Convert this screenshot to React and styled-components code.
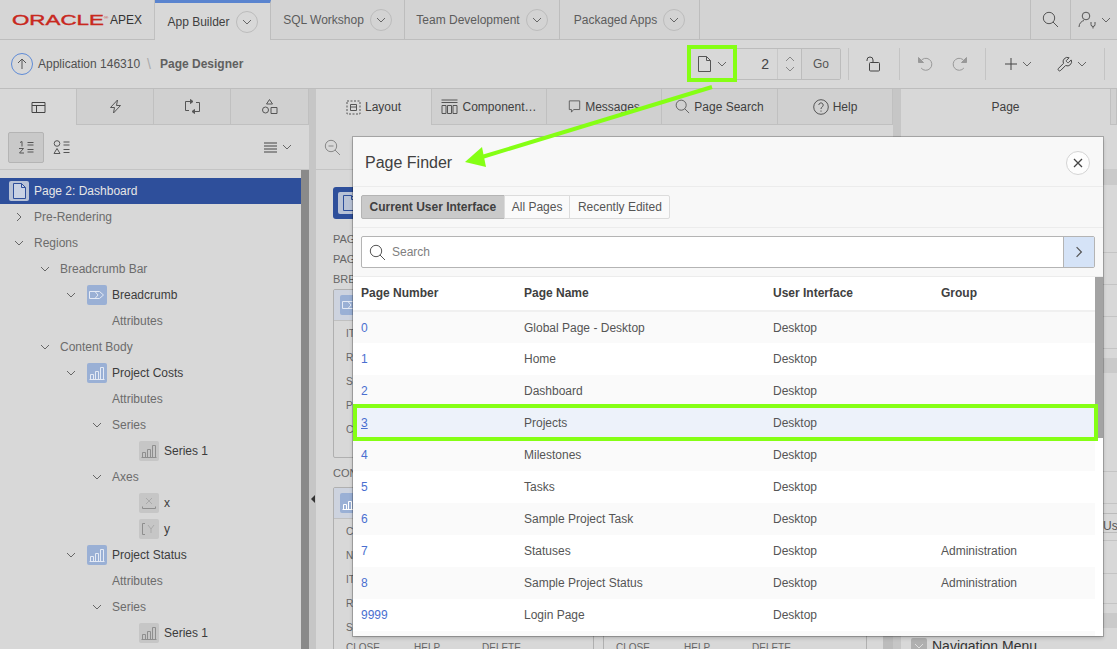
import React from 'react';
import styled, { createGlobalStyle } from 'styled-components';

const GlobalStyle = createGlobalStyle`
  html, body { margin: 0; height: 100%; overflow: hidden; background: #d8d8d8; }
  body { font-family: "Liberation Sans", Arial, sans-serif; font-size: 12px; color: #404040; }
  * { box-sizing: border-box; }
`;

const Page = styled.div`
  position: relative;
  width: 1117px;
  height: 649px;
  display: flex;
  flex-direction: column;
  overflow: hidden;
`;

// icons
const Svg = styled.svg`
  display: block;
  flex: none;
  fill: none;
  stroke: ${({ $color }) => $color || '#555'};
  stroke-width: ${({ $sw }) => $sw || 1};
`;

const Icon = ({ size = 16, w, h, color, sw, box, children }) => (
  <Svg width={w || size} height={h || size} viewBox={box || '0 0 16 16'} $color={color} $sw={sw}>
    {children}
  </Svg>
);

const ChevronDown = ({ size = 10, color = '#666' }) => (
  <Icon size={size} box="0 0 10 10" color={color}><path d="M1 3l4 4 4-4" /></Icon>
);
const ChevronRight = ({ size = 10, color = '#666' }) => (
  <Icon size={size} box="0 0 10 10" color={color}><path d="M3 1l4 4-4 4" /></Icon>
);
const Magnifier = ({ size = 17, color = '#555' }) => (
  <Icon size={size} box="0 0 17 17" color={color}><circle cx="7" cy="7" r="5.7" /><path d="M11 11l5 5" /></Icon>
);
const DocIcon = ({ w = 13, h = 16, color = '#555', fill = 'none' }) => (
  <Icon w={w} h={h} box="0 0 13 16" color={color}><path d="M.5.5h8l4 4v11H.5z" fill={fill} /><path d="M8.5.5v4h4" /></Icon>
);
const BarsIcon = ({ color = '#fff' }) => (
  <Icon w={16} h={14} box="0 0 16 14" color={color}>
    <path d="M.5 13.5h15M1.5 13.5v-5h3v5M6.5 13.5v-8h3v8M11.5 13.5V1.5h3v12" />
  </Icon>
);
const CrumbIcon = () => (
  <Icon w={16} h={10} box="0 0 16 10" color="#e4eaf5">
    <path d="M.5 1.5h10l4 3.5-4 3.5H.5zM6 1.5l3 3.5-3 3.5" />
  </Icon>
);

// top bar
const TopNav = styled.header`
  height: 40px;
  flex: none;
  display: flex;
  background: #d3d3d3;
  border-bottom: 1px solid #bdbdbd;
`;
const LogoCell = styled.div`
  width: 155px;
  display: flex;
  align-items: center;
  padding-left: 12px;
  background: #d6d6d6;
  border-right: 1px solid #c0c0c0;
`;
const OracleWord = styled.span`
  width: 98px;
  font-size: 14.5px;
  color: #c8281e;
  transform: scaleX(1.54);
  transform-origin: left center;
  -webkit-text-stroke: 0.4px #c8281e;
  white-space: nowrap;
`;
const OracleMark = styled.sup`
  font-size: 4px;
  -webkit-text-stroke: 0;
`;
const ApexWord = styled.span`
  font-size: 12px;
  color: #333;
`;
const NavTab = styled.div`
  width: ${({ $w }) => $w}px;
  display: flex;
  align-items: center;
  justify-content: center;
  gap: 6px;
  color: ${({ $active }) => ($active ? '#404040' : '#5c5c5c')};
  background: ${({ $active }) => ($active ? '#d8d8d8' : 'transparent')};
  border-right: 1px solid #bdbdbd;
  border-top: ${({ $active }) => ($active ? '3px solid #5a84cf' : '0')};
  margin-bottom: ${({ $active }) => ($active ? '-1px' : '0')};
  white-space: nowrap;
`;
const RoundToggle = styled.span`
  width: 22px;
  height: 22px;
  border: 1px solid #bcbcbc;
  border-radius: 50%;
  display: flex;
  align-items: center;
  justify-content: center;
`;
const NavSpacer = styled.div`
  flex: 1;
`;
const NavAction = styled.div`
  width: ${({ $w }) => $w}px;
  display: flex;
  align-items: center;
  justify-content: center;
  gap: 3px;
  border-left: 1px solid #bdbdbd;
`;

// second bar
const ToolBar = styled.div`
  height: 49px;
  flex: none;
  display: flex;
  align-items: center;
  padding-left: 11px;
  background: #d8d8d8;
  border-bottom: 1px solid #bdbdbd;
`;
const UpButton = styled.span`
  width: 22px;
  height: 22px;
  border: 1px solid #5f8bd6;
  border-radius: 50%;
  display: flex;
  align-items: center;
  justify-content: center;
`;
const Crumb = styled.span`
  margin-left: 5px;
  color: #505050;
`;
const CrumbSep = styled.span`
  margin: 0 9px 0 7px;
  color: #aaa;
  font-size: 14px;
`;
const CrumbCurrent = styled.span`
  font-weight: bold;
  color: #606060;
`;
const ToolSpacer = styled.div`
  flex: 1;
`;
const PageBox = styled.div`
  width: 154px;
  height: 32px;
  margin-right: 7px;
  display: flex;
  border: 1px solid #bcbcbc;
  border-radius: 2px;
`;
const PagePick = styled.div`
  width: 49px;
  display: flex;
  align-items: center;
  justify-content: center;
  gap: 6px;
`;
const PageNumber = styled.div`
  width: 40px;
  display: flex;
  align-items: center;
  justify-content: flex-end;
  padding-right: 8px;
  font-size: 14px;
  color: #444;
`;
const Spinner = styled.div`
  width: 24px;
  display: flex;
  flex-direction: column;
  align-items: center;
  justify-content: center;
  gap: 4px;
  border-left: 1px solid #c8c8c8;
`;
const GoButton = styled.div`
  flex: 1;
  display: flex;
  align-items: center;
  justify-content: center;
  color: #555;
  background: #d4d4d4;
  border-left: 1px solid #bcbcbc;
`;
const ToolSep = styled.span`
  width: 1px;
  height: 32px;
  background: #c4c4c4;
`;
const ToolCell = styled.div`
  width: ${({ $w }) => $w}px;
  padding-right: ${({ $pr }) => $pr || 0}px;
  display: flex;
  align-items: center;
  justify-content: center;
  gap: ${({ $gap }) => $gap || 4}px;
`;

// workspace
const Workspace = styled.main`
  flex: 1;
  min-height: 0;
  display: flex;
`;
const Panel = styled.section`
  width: ${({ $w }) => $w}px;
  flex: none;
  display: flex;
  flex-direction: column;
  overflow: hidden;
  background: #d8d8d8;
`;
const Splitter = styled.div`
  width: ${({ $w }) => $w}px;
  flex: none;
  background: #c6c6c6;
  display: flex;
  align-items: center;
  justify-content: center;
  padding-top: 260px;
`;
const SplitArrow = styled.span`
  width: 0;
  height: 0;
  border: 4px solid transparent;
  border-left: 0;
  border-right: 4px solid #333;
`;
const TabStrip = styled.div`
  height: 36px;
  flex: none;
  display: flex;
  background: #d0d0d0;
`;
const PanelTab = styled.div`
  width: ${({ $w }) => $w}px;
  flex: ${({ $grow }) => ($grow ? 1 : 'none')};
  display: flex;
  align-items: center;
  justify-content: center;
  gap: 4px;
  color: #404040;
  white-space: nowrap;
  background: ${({ $active }) => ($active ? '#d8d8d8' : 'transparent')};
  border-right: 1px solid #c0c0c0;
  border-bottom: ${({ $active }) => ($active ? '0' : '1px solid #c0c0c0')};
`;
const SubBar = styled.div`
  height: 45px;
  flex: none;
  display: flex;
  align-items: center;
  padding: 0 17px 0 8px;
  border-bottom: 1px solid #c4c4c4;
`;
const PressedButton = styled.div`
  width: 36px;
  height: 31px;
  display: flex;
  align-items: center;
  justify-content: center;
  background: #c9c9c9;
  border: 1px solid #b4b4b4;
  border-radius: 2px;
`;
const PlainButton = styled.div`
  margin-left: 9px;
  width: 18px;
  display: flex;
  justify-content: center;
`;
const MenuButton = styled.div`
  margin-left: auto;
  display: flex;
  align-items: center;
  gap: 5px;
`;

// tree
const TreeWrap = styled.div`
  flex: 1;
  min-height: 0;
  display: flex;
`;
const Tree = styled.div`
  flex: 1;
  padding-top: 8px;
  overflow: hidden;
`;
const Scroll = styled.div`
  width: 8px;
  flex: none;
  background: #8a8a8a;
`;
const TreeRow = styled.div`
  height: 26px;
  display: flex;
  align-items: center;
  padding-left: ${({ $d }) => ($d < 0 ? 9 : 14 + $d * 26)}px;
  color: ${({ $selected, $dark }) => ($selected ? '#e6e6e6' : $dark ? '#3c3c3c' : '#6c6c6c')};
  background: ${({ $selected }) => ($selected ? '#2e4f9b' : 'transparent')};
  white-space: nowrap;
`;
const ChevronSlot = styled.span`
  width: 20px;
  flex: none;
  display: flex;
`;
const NodeIcon = styled.span`
  width: 20px;
  height: 20px;
  margin: ${({ $root }) => ($root ? '0 5px 0 0' : '0 5px 0 1px')};
  flex: none;
  display: flex;
  align-items: center;
  justify-content: center;
  border-radius: 2px;
  background: ${({ $tone }) => ($tone === 'blue' ? '#9ab0d5' : $tone === 'root' ? '#b8c2d6' : '#c6c6c6')};
  color: #9a9a9a;
  font-size: 10px;
`;

const treeRows = [
  { d: -1, label: 'Page 2: Dashboard', icon: 'root', selected: true },
  { d: 0, label: 'Pre-Rendering', chevron: 'right' },
  { d: 0, label: 'Regions', chevron: 'down' },
  { d: 1, label: 'Breadcrumb Bar', chevron: 'down' },
  { d: 2, label: 'Breadcrumb', chevron: 'down', icon: 'crumb', dark: true },
  { d: 3, label: 'Attributes' },
  { d: 1, label: 'Content Body', chevron: 'down' },
  { d: 2, label: 'Project Costs', chevron: 'down', icon: 'chart', dark: true },
  { d: 3, label: 'Attributes' },
  { d: 3, label: 'Series', chevron: 'down' },
  { d: 4, label: 'Series 1', icon: 'series', dark: true },
  { d: 3, label: 'Axes', chevron: 'down' },
  { d: 4, label: 'x', icon: 'x', dark: true },
  { d: 4, label: 'y', icon: 'y', dark: true },
  { d: 2, label: 'Project Status', chevron: 'down', icon: 'chart', dark: true },
  { d: 3, label: 'Attributes' },
  { d: 3, label: 'Series', chevron: 'down' },
  { d: 4, label: 'Series 1', icon: 'series', dark: true },
];

const TreeIcon = ({ kind }) => {
  if (kind === 'root') {
    return <NodeIcon $tone="root" $root><DocIcon color="#2e4f9b" fill="#c9d2e4" /></NodeIcon>;
  }
  if (kind === 'crumb') return <NodeIcon $tone="blue"><CrumbIcon /></NodeIcon>;
  if (kind === 'chart') return <NodeIcon $tone="blue"><BarsIcon color="#e4eaf5" /></NodeIcon>;
  if (kind === 'series') return <NodeIcon><BarsIcon color="#8e8e8e" /></NodeIcon>;
  if (kind === 'x') {
    return (
      <NodeIcon>
        <Icon w={16} h={14} box="0 0 16 14" color="#8e8e8e">
          <path d="M5 2l6 6M11 2l-6 6" stroke="#aaa" /><path d="M1.5 10.5v2h13v-2" />
        </Icon>
      </NodeIcon>
    );
  }
  return (
    <NodeIcon>
      <Icon w={16} h={14} box="0 0 16 14" color="#8e8e8e">
        <path d="M4 1.5H1.5v11H4" /><path d="M7 3l3 4 3-4M10 7v4" stroke="#aaa" />
      </Icon>
    </NodeIcon>
  );
};

// center panel body
const CenterBody = styled.div`
  flex: 1;
  min-height: 0;
  display: flex;
  overflow: hidden;
`;
const Canvas = styled.div`
  width: 567px;
  flex: none;
  padding: 17px 0 0 17px;
`;
const CenterScroll = styled.div`
  width: 10px;
  flex: none;
  background: #bcbcbc;
`;
const PageBlock = styled.div`
  width: 40px;
  height: 32px;
  margin-bottom: 10px;
  display: flex;
  align-items: center;
  padding-left: 5px;
  background: #2e4f9b;
  border-radius: 3px;
`;
const PageBlockIcon = styled.span`
  width: 22px;
  height: 22px;
  display: flex;
  align-items: center;
  justify-content: center;
  background: #b8c2d6;
  border-radius: 2px;
`;
const GroupLabel = styled.div`
  height: ${({ $h }) => $h || 20}px;
  display: flex;
  align-items: center;
  font-size: 11px;
  color: #666;
  white-space: nowrap;
`;
const BoxGrid = styled.div`
  display: grid;
  grid-template-columns: 261px 264px;
  gap: 9px;
`;
const RegionBox = styled.div`
  height: ${({ $h }) => $h}px;
  border: 1px solid #b0b0b0;
  border-radius: 2px;
  overflow: hidden;
`;
const RegionHead = styled.div`
  height: 31px;
  display: flex;
  align-items: center;
  padding-left: 5px;
  background: #cdd3df;
  border-bottom: 1px solid #c0c0c0;
`;
const RegionRow = styled.div`
  height: 24px;
  display: flex;
  align-items: center;
  padding-left: 12px;
  font-size: 10px;
  color: #666;
`;
const RegionFoot = styled.div`
  display: flex;
  padding: 3px 0 0 12px;
  font-size: 10px;
  color: #666;
`;
const FootAction = styled.span`
  width: 68px;
`;

// right panel
const PropBody = styled.div`
  flex: 1;
  padding-top: 44px;
`;
const PropBand = styled.div`
  height: ${({ $h }) => $h || 15}px;
  background: #cacaca;
`;
const PropLine = styled.div`
  height: ${({ $h }) => $h}px;
  padding-left: 202px;
  display: flex;
  align-items: center;
  color: #555;
  border-bottom: ${({ $plain }) => ($plain ? '0' : '1px solid #c4c4c4')};
  white-space: nowrap;
  overflow: hidden;
`;
const ValueBox = styled.span`
  height: 20px;
  flex: 1;
  align-self: flex-end;
  margin-bottom: 7px;
  padding-top: 5px;
  border-top: 1px solid #bbb;
  border-bottom: 1px solid #bbb;
`;
const PropTitle = styled.div`
  margin-top: 8px;
  height: 20px;
  padding-left: 10px;
  display: flex;
  align-items: center;
  gap: 5px;
  font-size: 14px;
  color: #333;
`;
const CollapseBox = styled.span`
  width: 16px;
  height: 16px;
  display: flex;
  align-items: center;
  justify-content: center;
  background: #b0b0b0;
  border-radius: 2px;
`;

// modal
const Modal = styled.div`
  position: absolute;
  left: 353px;
  top: 137px;
  width: 750px;
  height: 499px;
  display: flex;
  flex-direction: column;
  background: #f8f8f8;
  box-shadow: 0 0 0 1px rgba(0, 0, 0, 0.22), 0 2px 4px rgba(0, 0, 0, 0.2);
`;
const ModalHead = styled.div`
  height: 50px;
  flex: none;
  display: flex;
  align-items: center;
  justify-content: space-between;
  padding: 2px 13px 0 12px;
  border-bottom: 1px solid #ececec;
`;
const ModalTitle = styled.h1`
  margin: 0;
  font-size: 16px;
  font-weight: normal;
  color: #404040;
`;
const CloseButton = styled.span`
  width: 24px;
  height: 24px;
  display: flex;
  align-items: center;
  justify-content: center;
  border: 1px solid #d4d4d4;
  border-radius: 50%;
  background: #fdfdfd;
`;
const FilterBar = styled.div`
  height: 41px;
  flex: none;
  display: flex;
  align-items: flex-start;
  padding: 8px 0 0 8px;
  border-bottom: 1px solid #ececec;
`;
const Segment = styled.div`
  height: 24px;
  padding: 0 ${({ $pad }) => $pad}px;
  display: flex;
  align-items: center;
  color: ${({ $on }) => ($on ? '#404040' : '#555')};
  font-weight: ${({ $on }) => ($on ? 'bold' : 'normal')};
  background: ${({ $on }) => ($on ? '#cacaca' : '#fafafa')};
  border: 1px solid ${({ $on }) => ($on ? '#b4b4b4' : '#dcdcdc')};
  margin-left: -1px;
  &:first-child { margin-left: 0; border-radius: 2px 0 0 2px; }
  &:last-child { border-radius: 0 2px 2px 0; }
`;
const SearchBar = styled.div`
  height: 49px;
  flex: none;
  padding: 8px 8px 0;
  background: #f8f8f8;
  border-bottom: 1px solid #ececec;
`;
const SearchField = styled.div`
  height: 32px;
  display: flex;
  align-items: center;
  background: #fff;
  border: 1px solid #b4b4b4;
  border-radius: 2px;
`;
const SearchText = styled.span`
  flex: 1;
  margin-left: 6px;
  color: #808080;
`;
const SearchGo = styled.span`
  width: 31px;
  height: 100%;
  display: flex;
  align-items: center;
  justify-content: center;
  background: #d5e3f7;
  border-left: 1px solid #b4b4b4;
`;
const SearchGlass = styled.span`
  margin-left: 7px;
`;
const TableWrap = styled.div`
  flex: 1;
  min-height: 0;
  display: flex;
  background: #fff;
`;
const TableArea = styled.div`
  width: 742px;
  flex: none;
  overflow: hidden;
  background: #fafafa;
`;
const TableScroll = styled.div`
  width: 8px;
  flex: none;
`;
const ScrollThumb = styled.div`
  height: 161px;
  background: #a3a3a3;
`;
const Table = styled.table`
  width: 100%;
  table-layout: fixed;
  border-collapse: collapse;
`;
const Th = styled.th`
  width: ${({ $w }) => ($w ? `${$w}px` : 'auto')};
  height: 34px;
  padding: 0 0 2px 8px;
  text-align: left;
  font-weight: bold;
  color: #404040;
  background: #fff;
  border-bottom: 2px solid #f0f0f0;
`;
const Tr = styled.tr`
  height: 32px;
  background: ${({ $hit, $odd }) => ($hit ? '#edf2fa' : $odd ? '#fafafa' : '#fff')};
`;
const Td = styled.td`
  padding: 0 0 0 8px;
  color: #555;
  white-space: nowrap;
`;
const NumberLink = styled.a`
  color: #4a6fd0;
  text-decoration: ${({ $hit }) => ($hit ? 'underline' : 'none')};
`;

// green call-outs over the screenshot
const Callouts = styled.svg`
  position: absolute;
  left: 0;
  top: 0;
  width: 1117px;
  height: 649px;
  pointer-events: none;
`;

const pages = [
  ['0', 'Global Page - Desktop', ''],
  ['1', 'Home', ''],
  ['2', 'Dashboard', ''],
  ['3', 'Projects', ''],
  ['4', 'Milestones', ''],
  ['5', 'Tasks', ''],
  ['6', 'Sample Project Task', ''],
  ['7', 'Statuses', 'Administration'],
  ['8', 'Sample Project Status', 'Administration'],
  ['9999', 'Login Page', ''],
];

const navTabs = [
  { label: 'App Builder', w: 116, active: true },
  { label: 'SQL Workshop', w: 134 },
  { label: 'Team Development', w: 155 },
  { label: 'Packaged Apps', w: 140 },
];

const RegionCard = () => (
  <RegionBox $h={180}>
    <RegionHead>
      <NodeIcon $tone="blue"><BarsIcon /></NodeIcon>
    </RegionHead>
    <RegionRow>CHART</RegionRow>
    <RegionRow>NAME</RegionRow>
    <RegionRow>ITEMS</RegionRow>
    <RegionRow>REGIONS</RegionRow>
    <RegionRow>SUB REGIONS</RegionRow>
    <RegionFoot>
      <FootAction>CLOSE</FootAction>
      <FootAction>HELP</FootAction>
      <FootAction>DELETE</FootAction>
    </RegionFoot>
  </RegionBox>
);

export default function App() {
  return (
    <>
      <GlobalStyle />
      <Page>
        <TopNav>
          <LogoCell>
            <OracleWord>ORACLE<OracleMark>®</OracleMark></OracleWord>
            <ApexWord>APEX</ApexWord>
          </LogoCell>
          {navTabs.map((tab) => (
            <NavTab key={tab.label} $w={tab.w} $active={tab.active}>
              {tab.label}
              <RoundToggle><ChevronDown /></RoundToggle>
            </NavTab>
          ))}
          <NavSpacer />
          <NavAction $w={40}><Magnifier /></NavAction>
          <NavAction $w={47}>
            <Icon w={20} h={18} box="0 0 20 18" color="#555">
              <circle cx="8" cy="5" r="3.8" /><path d="M1 16c0-4 3-6 5-6.5M13 11v2.5a2 2 0 0 0 4 0V11M15 15.500v2" />
            </Icon>
            <ChevronDown />
          </NavAction>
        </TopNav>

        <ToolBar>
          <UpButton>
            <Icon size={12} box="0 0 12 12" color="#555"><path d="M6 11V1M2 5l4-4 4 4" /></Icon>
          </UpButton>
          <Crumb>Application 146310</Crumb>
          <CrumbSep>\</CrumbSep>
          <CrumbCurrent>Page Designer</CrumbCurrent>
          <ToolSpacer />
          <PageBox>
            <PagePick><DocIcon /><ChevronDown /></PagePick>
            <PageNumber>2</PageNumber>
            <Spinner>
              <Icon w={10} h={6} box="0 0 10 6" color="#888"><path d="M1 5l4-4 4 4" /></Icon>
              <Icon w={10} h={6} box="0 0 10 6" color="#888"><path d="M1 1l4 4 4-4" /></Icon>
            </Spinner>
            <GoButton>Go</GoButton>
          </PageBox>
          <ToolSep />
          <ToolCell $w={50} $pr={3}>
            <Icon size={16} color="#444"><rect x="4.500" y="6.500" width="10" height="8.500" rx="1" /><path d="M8 6.500V4a3 3 0 0 0-6 0v1" /></Icon>
          </ToolCell>
          <ToolSep />
          <ToolCell $w={85} $gap={19}>
            <Icon size={16} color="#999"><path d="M3.500 5.500a6 6 0 1 1 .6 6.500" /><path d="M1.500 1.500v5h5z" fill="#999" /></Icon>
            <Icon size={16} color="#999"><path d="M12.500 5.500a6 6 0 1 0-.6 6.500" /><path d="M14.500 1.500v5h-5z" fill="#999" /></Icon>
          </ToolCell>
          <ToolSep />
          <ToolCell $w={64}>
            <Icon size={14} box="0 0 14 14" color="#444"><path d="M7 1v12M1 7h12" /></Icon>
            <ChevronDown />
          </ToolCell>
          <ToolCell $w={54} $pr={12}>
            <Icon size={17} box="0 0 24 24" color="#444" sw={1.4}>
              <path d="M14.700 6.300a1 1 0 0 0 0 1.400l1.600 1.600a1 1 0 0 0 1.400 0l3.770-3.770a6 6 0 0 1-7.940 7.940l-6.910 6.910a2.120 2.120 0 0 1-3-3l6.910-6.910a6 6 0 0 1 7.940-7.940z" />
            </Icon>
            <ChevronDown />
          </ToolCell>
          <ToolSep />
          <ToolCell $w={12} />
        </ToolBar>

        <Workspace>
          <Panel $w={309}>
            <TabStrip>
              <PanelTab $w={77} $active>
                <Icon size={15} box="0 0 15 15" color="#444"><path d="M1 2.500h13v10H1zM1 5.500h13M5.500 5.500v7" /></Icon>
              </PanelTab>
              <PanelTab $w={77}>
                <Icon size={15} box="0 0 15 15" color="#555"><path d="M9.500 1L2.500 8.500h4L5.500 14l7-7.500h-4z" /></Icon>
              </PanelTab>
              <PanelTab $w={77}>
                <Icon size={17} box="0 0 17 17" color="#555">
                  <path d="M6 3.500H1.500v9H5M11 13.500h4.500v-9H12" /><path d="M6.500 1.500v4l2.500-2zM10.500 11.500v4l-2.500-2z" fill="#555" />
                </Icon>
              </PanelTab>
              <PanelTab $grow>
                <Icon size={17} box="0 0 17 17" color="#555">
                  <path d="M8.500 1.500l3 4.500h-6z" /><circle cx="4.500" cy="12" r="3" /><path d="M10 9.500h6v6h-6z" />
                </Icon>
              </PanelTab>
            </TabStrip>
            <SubBar>
              <PressedButton>
                <Icon w={18} h={14} box="0 0 18 14" color="#555">
                  <path d="M3 2.500l2-1v5M10.500 2.500h6M10.500 5h6M2 8.500h4.500L2.500 13h4.500M10.500 9.500h6M10.500 12h6" />
                </Icon>
              </PressedButton>
              <PlainButton>
                <Icon w={18} h={15} box="0 0 18 15" color="#555">
                  <circle cx="4" cy="3.500" r="2.800" /><path d="M4 8.500l3 5H1zM10.500 2h6M10.500 5h6M10.500 9.500h6M10.500 12.500h6" />
                </Icon>
              </PlainButton>
              <MenuButton>
                <Icon w={13} h={11} box="0 0 13 11" color="#444"><path d="M0 1h13M0 4h13M0 7h13M0 10h13" /></Icon>
                <ChevronDown />
              </MenuButton>
            </SubBar>
            <TreeWrap>
              <Tree>
                {treeRows.map((row, i) => (
                  <TreeRow key={i} $d={row.d} $selected={row.selected} $dark={row.dark}>
                    {row.d >= 0 && (
                      <ChevronSlot>
                        {row.chevron === 'down' && <ChevronDown />}
                        {row.chevron === 'right' && <ChevronRight />}
                      </ChevronSlot>
                    )}
                    {row.icon && <TreeIcon kind={row.icon} />}
                    {row.label}
                  </TreeRow>
                ))}
              </Tree>
              <Scroll />
            </TreeWrap>
          </Panel>

          <Splitter $w={7}><SplitArrow /></Splitter>

          <Panel $w={577}>
            <TabStrip>
              <PanelTab $w={116} $active>
                <Icon size={15} box="0 0 15 15" color="#555">
                  <path d="M1 1h13v13H1z" strokeDasharray="2 1.500" /><path d="M4.500 4.500h6v6h-6zM4.500 7h6" />
                </Icon>
                Layout
              </PanelTab>
              <PanelTab $w={115}>
                <Icon w={17} h={15} box="0 0 17 15" color="#555">
                  <path d="M.5 1h16M.5 3.500h16M1 6.500h4v8H1zM6.500 6.500h4v8h-4zM12 6.500h4v8h-4z" />
                </Icon>
                Component…
              </PanelTab>
              <PanelTab $w={115}>
                <Icon w={13} h={15} box="0 0 15 15" color="#555"><path d="M1.500 1h12v10H6.500l-2.500 3v-3H1.500z" /></Icon>
                Messages
              </PanelTab>
              <PanelTab $w={116}><Magnifier size={15} />Page Search</PanelTab>
              <PanelTab $grow>
                <Icon size={16} color="#555">
                  <circle cx="8" cy="8" r="7.300" /><path d="M5.800 6a2.200 2.200 0 1 1 3.300 2c-.8.500-1.100 1-1.100 2M8 11.500v1.200" />
                </Icon>
                Help
              </PanelTab>
            </TabStrip>
            <SubBar>
              <Icon size={17} box="0 0 17 17" color="#888">
                <circle cx="7" cy="7" r="5.700" /><path d="M11 11l5 5M4.500 7h5" />
              </Icon>
            </SubBar>
            <CenterBody>
              <Canvas>
                <PageBlock>
                  <PageBlockIcon><DocIcon color="#2e4f9b" /></PageBlockIcon>
                </PageBlock>
                <GroupLabel>PAGE HEADER</GroupLabel>
                <GroupLabel>PAGE NAVIGATION</GroupLabel>
                <GroupLabel>BREADCRUMB BAR</GroupLabel>
                <RegionBox $h={169}>
                  <RegionHead>
                    <NodeIcon $tone="blue"><CrumbIcon /></NodeIcon>
                  </RegionHead>
                  <RegionRow>ITEMS</RegionRow>
                  <RegionRow>REGIONS</RegionRow>
                  <RegionRow>SUB REGIONS</RegionRow>
                  <RegionRow>POSITIONS</RegionRow>
                  <RegionRow>COPY</RegionRow>
                </RegionBox>
                <GroupLabel $h={29}>CONTENT BODY</GroupLabel>
                <BoxGrid>
                  <RegionCard />
                  <RegionCard />
                </BoxGrid>
              </Canvas>
              <CenterScroll />
            </CenterBody>
          </Panel>

          <Splitter $w={8} />

          <Panel $w={216}>
            <TabStrip>
              <PanelTab $w={210} $active>Page</PanelTab>
              <PanelTab $grow />
            </TabStrip>
            <PropBody>
              <PropBand $h={16} />
              <PropLine $h={68} />
              <PropLine $h={32} />
              <PropLine $h={32} />
              <PropLine $h={32} />
              <PropLine $h={9} $plain />
              <PropBand />
              <PropLine $h={99} />
              <PropLine $h={32} />
              <PropLine $h={37}><ValueBox>User</ValueBox></PropLine>
              <PropLine $h={33} />
              <PropLine $h={30} />
              <PropLine $h={9} $plain />
              <PropBand />
              <PropTitle>
                <CollapseBox><ChevronDown color="#ddd" /></CollapseBox>
                Navigation Menu
              </PropTitle>
            </PropBody>
          </Panel>
        </Workspace>

        <Modal>
          <ModalHead>
            <ModalTitle>Page Finder</ModalTitle>
            <CloseButton>
              <Icon size={10} box="0 0 10 10" color="#444" sw={1.3}><path d="M1 1l8 8M9 1l-8 8" /></Icon>
            </CloseButton>
          </ModalHead>
          <FilterBar>
            <Segment $on $pad={7.5}>Current User Interface</Segment>
            <Segment $pad={7}>All Pages</Segment>
            <Segment $pad={7.5}>Recently Edited</Segment>
          </FilterBar>
          <SearchBar>
            <SearchField>
              <SearchGlass><Magnifier /></SearchGlass>
              <SearchText>Search</SearchText>
              <SearchGo><ChevronRight size={12} color="#555" /></SearchGo>
            </SearchField>
          </SearchBar>
          <TableWrap>
            <TableArea>
              <Table>
                <thead>
                  <tr>
                    <Th $w={163}>Page Number</Th>
                    <Th $w={249}>Page Name</Th>
                    <Th $w={168}>User Interface</Th>
                    <Th>Group</Th>
                  </tr>
                </thead>
                <tbody>
                  {pages.map(([num, name, group], i) => (
                    <Tr key={num} $odd={i % 2 === 0} $hit={num === '3'}>
                      <Td><NumberLink $hit={num === '3'}>{num}</NumberLink></Td>
                      <Td>{name}</Td>
                      <Td>Desktop</Td>
                      <Td>{group}</Td>
                    </Tr>
                  ))}
                </tbody>
              </Table>
            </TableArea>
            <TableScroll><ScrollThumb /></TableScroll>
          </TableWrap>
        </Modal>

        <Callouts viewBox="0 0 1117 649">
          <g fill="none" stroke="#85ff14" strokeWidth="4">
            <rect x="689" y="47" width="46" height="33" />
            <rect x="355" y="406" width="741" height="33" />
            <path d="M712 87L482 157" />
          </g>
          <path d="M465 162L482 147L486 167z" fill="#85ff14" />
        </Callouts>
      </Page>
    </>
  );
}
